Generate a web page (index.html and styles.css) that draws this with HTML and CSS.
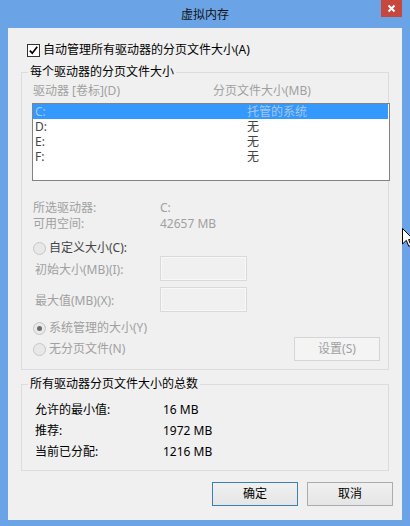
FILE: index.html
```html
<!DOCTYPE html>
<html lang="zh-CN">
<head>
<meta charset="utf-8">
<title>虚拟内存</title>
<link rel="stylesheet" href="styles.css">
</head>
<body>
<div class="window">
  <div class="titlebar">
    <span class="title">虚拟内存</span>
    <span class="close"><svg width="21" height="17" viewBox="0 0 21 17"><path d="M7.5 5.5 L13.5 11.5 M13.5 5.5 L7.5 11.5" stroke="#fff" stroke-width="2" fill="none"/></svg></span>
  </div>
  <div class="client">
    <div class="check-row">
      <span class="checkbox"><svg width="11" height="11" viewBox="0 0 11 11"><path d="M1.8 5.6 L4.3 8.2 L9.2 1.8" stroke="#000" stroke-width="1.7" fill="none"/></svg></span>
      <span>自动管理所有驱动器的分页文件大小(A)</span>
    </div>

    <fieldset class="group">
      <legend>每个驱动器的分页文件大小</legend>
      <div class="list-head"><span class="c1">驱动器 [卷标](D)</span><span>分页文件大小(MB)</span></div>
      <div class="listbox">
        <div class="row sel"><span class="c1">C:</span><span class="c2">托管的系统</span></div>
        <div class="row"><span class="c1">D:</span><span class="c2">无</span></div>
        <div class="row"><span class="c1">E:</span><span class="c2">无</span></div>
        <div class="row"><span class="c1">F:</span><span class="c2">无</span></div>
      </div>
      <div class="info">
        <div class="kv"><span class="k">所选驱动器:</span><span>C:</span></div>
        <div class="kv"><span class="k">可用空间:</span><span>42657 MB</span></div>
      </div>
      <div class="radio-row custom"><span class="radio"></span><span>自定义大小(C):</span></div>
      <div class="field"><span class="fl">初始大小(MB)(I):</span><span class="textbox"></span></div>
      <div class="field field2"><span class="fl">最大值(MB)(X):</span><span class="textbox"></span></div>
      <div class="radio-row sys"><span class="radio on"></span><span>系统管理的大小(Y)</span></div>
      <div class="nopage">
        <div class="radio-row"><span class="radio"></span><span>无分页文件(N)</span></div>
        <button class="btn btn-set" disabled>设置(S)</button>
      </div>
    </fieldset>

    <fieldset class="group totals">
      <legend>所有驱动器分页文件大小的总数</legend>
      <div class="totals-body">
        <div class="kv"><span class="k">允许的最小值:</span><span>16 MB</span></div>
        <div class="kv"><span class="k">推荐:</span><span>1972 MB</span></div>
        <div class="kv"><span class="k">当前已分配:</span><span>1216 MB</span></div>
      </div>
    </fieldset>

    <div class="actions">
      <button class="btn default">确定</button>
      <button class="btn">取消</button>
    </div>
  </div>
  <svg class="cursor" width="12" height="20" viewBox="0 0 12 20"><path d="M0.5 0.5 L0.5 16 L4.3 12.4 L6.8 18.3 L9 17.3 L6.6 11.6 L11.5 11.6 Z" fill="#fff" stroke="#000" stroke-width="1"/></svg>
</div>
</body>
</html>
```

FILE: styles.css
```css
* { box-sizing: border-box; }
html, body { margin: 0; padding: 0; }
body {
  width: 410px;
  height: 526px;
  overflow: hidden;
  background: #6aa4e6;
  font-family: "Noto Sans", "Noto Sans CJK SC", sans-serif;
  font-size: 12px;
  color: #000;
}
.window {
  position: relative;
  width: 410px;
  height: 526px;
  background: #6aa4e6;
  padding: 0 8px 6px 8px;
  display: flex;
  flex-direction: column;
  overflow: hidden;
}
.titlebar {
  height: 28px;
  flex: none;
  display: grid;
  grid-template-columns: 1fr auto 1fr;
  align-items: start;
}
.title {
  grid-column: 2;
  line-height: 16px;
  padding-top: 7px;
  color: #111;
}
.close {
  grid-column: 3;
  justify-self: end;
  width: 21px;
  height: 17px;
  background: #c7473f;
  display: flex;
}
.client {
  flex: 1;
  background: #f0f0f0;
  padding: 14px 13px 0 13px;
  display: flex;
  flex-direction: column;
}
.check-row {
  display: flex;
  align-items: center;
  gap: 3px;
  height: 16px;
  line-height: 16px;
  margin-left: 6px;
}
.checkbox {
  width: 13px;
  height: 13px;
  border: 1px solid #333;
  background: #fff;
  display: flex;
}
.group {
  margin: 6px 0 0 0;
  border: 1px solid #dcdcdc;
  padding: 3px 0 8px 10px;
  min-width: 0;
}
.group legend {
  padding: 0 2px;
  margin-left: -4px;
  line-height: 16px;
  color: #000;
}
.list-head {
  display: flex;
  line-height: 16px;
  padding-left: 1px;
  color: #a0a0a0;
}
.list-head .c1 { width: 180px; }
.listbox {
  margin-top: 4px;
  width: 358px;
  height: 78px;
  border: 1px solid #838383;
  background: #fff;
}
.row {
  display: flex;
  height: 15px;
  padding-left: 2px;
  color: #444;
}
.row span {
  display: block;
  height: 15px;
  line-height: 15px;
  font-size: 12px;
  overflow: hidden;
}
.row .c1 { width: 212px; }
.row.sel {
  background: #3399ff;
  color: #a9c5e4;
  margin-right: 1px;
}
.info {
  margin-top: 19px;
  padding-left: 1px;
  color: #a0a0a0;
}
.kv {
  display: flex;
  line-height: 16px;
}
.kv .k { width: 127px; }
.radio-row {
  display: flex;
  align-items: center;
  gap: 3px;
  height: 16px;
  line-height: 16px;
  margin-left: 1px;
  color: #a0a0a0;
}
.radio-row.custom {
  margin-top: 8px;
  color: #444;
}
.radio-row.sys { margin-top: 8px; }
.radio {
  width: 13px;
  height: 13px;
  border-radius: 50%;
  border: 1px solid #c6c6c6;
  background: #e8e8e8;
  display: flex;
  align-items: center;
  justify-content: center;
}
.radio.on::after {
  content: "";
  width: 5px;
  height: 5px;
  border-radius: 50%;
  background: #6a6a6a;
}
.field {
  display: flex;
  align-items: center;
  height: 25px;
  padding-left: 3px;
  color: #a0a0a0;
}
.field .fl { width: 125px; }
.field2 { margin-top: 6px; }
.textbox {
  width: 87px;
  height: 25px;
  border: 1px solid #d9d9d9;
  background: #f0f0f0;
  box-shadow: inset 0 0 0 1px #f8f8f8;
}
.nopage {
  display: flex;
  align-items: center;
  height: 24px;
  margin-top: 1px;
}
.btn {
  width: 86px;
  height: 24px;
  padding: 0;
  font: inherit;
  line-height: 16px;
  border: 1px solid #acacac;
  background: linear-gradient(#f0f0f0, #e5e5e5);
  color: #000;
}
.btn.default { border-color: #3c7fb1; }
.btn-set {
  margin-left: auto;
  margin-right: 8px;
  border-color: #d5d5d5;
  background: #f4f4f4;
  color: #a0a0a0;
}
.totals { padding: 10px 0 10px 10px; }
.totals-body { padding-left: 3px; }
.totals-body .kv .k { width: 128px; }
.totals-body .kv + .kv { margin-top: 5px; }
.actions {
  display: flex;
  justify-content: flex-end;
  gap: 9px;
  margin-top: 11px;
  margin-right: -4px;
}
.cursor {
  position: absolute;
  left: 402px;
  top: 228px;
}
```
